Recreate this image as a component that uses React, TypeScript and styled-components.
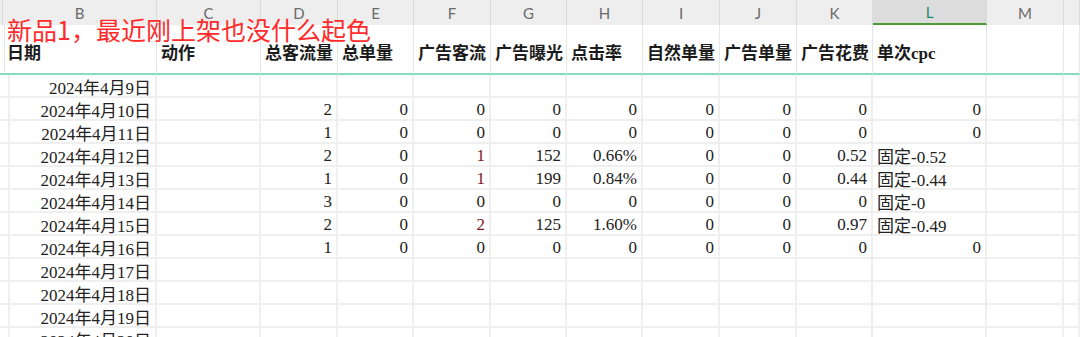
import React from "react";
import styled, { createGlobalStyle, css } from "styled-components";

const Global = createGlobalStyle`
  html, body { margin: 0; padding: 0; background: #ffffff; }
  body { width: 1080px; height: 337px; overflow: hidden; }
`;

const COLS = "3px 154px 104px 77px 76px 77px 76px 76px 77px 77px 76px 114px 77px 16px";

const Sheet = styled.div`
  position: relative;
  width: 1080px;
  height: 337px;
  overflow: hidden;
  background: #fff;
`;

const Row = styled.div<{ $h: number }>`
  display: grid;
  grid-template-columns: ${COLS};
  height: ${(p) => p.$h}px;
`;

const ColHead = styled.div<{ $active?: boolean }>`
  display: flex;
  align-items: center;
  justify-content: center;
  background: ${(p) => (p.$active ? "#dcdcdc" : "#eeeeee")};
  border-right: 1px solid #dadada;
  box-sizing: border-box;
  font-family: "Lato", "Open Sans", sans-serif;
  font-size: 15px;
  color: ${(p) => (p.$active ? "#1c8b72" : "#6a6a6a")};
  ${(p) =>
    p.$active &&
    css`
      border-bottom: 2px solid #4b9c34;
    `}
`;

const HeadCell = styled.div`
  display: flex;
  align-items: center;
  padding: 5px 0 0 4px;
  box-sizing: border-box;
  border-right: 1px solid #e6e6e6;
  border-bottom: 2px solid #86dcbd;
  font-family: "Liberation Serif", "Noto Sans CJK SC", serif;
  font-weight: 700;
  font-size: 17px;
  color: #1b1b1b;
  white-space: nowrap;
  overflow: hidden;
`;

const Cell = styled.div<{ $align?: "left" | "right"; $red?: boolean }>`
  display: flex;
  align-items: center;
  justify-content: ${(p) => (p.$align === "left" ? "flex-start" : "flex-end")};
  padding: 2px 4px 0 4px;
  box-sizing: border-box;
  border-right: 2px solid #efefef;
  border-bottom: 2px solid #efefef;
  font-family: "Liberation Serif", "Noto Sans CJK SC", serif;
  font-size: 17px;
  color: ${(p) => (p.$red ? "#7c1c1c" : "#222222")};
  white-space: nowrap;
  overflow: hidden;
`;

const Note = styled.div`
  position: absolute;
  left: 7px;
  top: 11px;
  font-family: "Noto Sans CJK SC", "Noto Sans", sans-serif;
  font-size: 25px;
  line-height: 36px;
  color: #ff2b2b;
  white-space: nowrap;
  pointer-events: none;
`;

const letters = ["", "B", "C", "D", "E", "F", "G", "H", "I", "J", "K", "L", "M", ""];
const heads = ["", "日期", "动作", "总客流量", "总单量", "广告客流", "广告曝光", "点击率", "自然单量", "广告单量", "广告花费", "单次cpc", "", ""];

type R = { date: string; v?: string[]; redF?: boolean; lText?: boolean };

const data: R[] = [
  { date: "2024年4月9日" },
  { date: "2024年4月10日", v: ["2", "0", "0", "0", "0", "0", "0", "0", "0"] },
  { date: "2024年4月11日", v: ["1", "0", "0", "0", "0", "0", "0", "0", "0"] },
  { date: "2024年4月12日", v: ["2", "0", "1", "152", "0.66%", "0", "0", "0.52", "固定-0.52"], redF: true, lText: true },
  { date: "2024年4月13日", v: ["1", "0", "1", "199", "0.84%", "0", "0", "0.44", "固定-0.44"], redF: true, lText: true },
  { date: "2024年4月14日", v: ["3", "0", "0", "0", "0", "0", "0", "0", "固定-0"], lText: true },
  { date: "2024年4月15日", v: ["2", "0", "2", "125", "1.60%", "0", "0", "0.97", "固定-0.49"], redF: true, lText: true },
  { date: "2024年4月16日", v: ["1", "0", "0", "0", "0", "0", "0", "0", "0"] },
  { date: "2024年4月17日" },
  { date: "2024年4月18日" },
  { date: "2024年4月19日" },
  { date: "2024年4月20日" },
];

export default function App() {
  return (
    <>
      <Global />
      <Sheet>
        <Row $h={25}>
          {letters.map((l, i) => (
            <ColHead key={i} $active={l === "L"}>
              {l}
            </ColHead>
          ))}
        </Row>
        <Row $h={50}>
          {heads.map((h, i) => (
            <HeadCell key={i}>{h}</HeadCell>
          ))}
        </Row>
        {data.map((r, ri) => (
          <Row $h={23} key={ri}>
            <Cell />
            <Cell>{r.date}</Cell>
            <Cell />
            {Array.from({ length: 9 }).map((_, ci) => {
              const val = r.v ? r.v[ci] : "";
              const isL = ci === 8;
              return (
                <Cell
                  key={ci}
                  $red={ci === 2 && r.redF && val !== "0"}
                  $align={isL && r.lText ? "left" : "right"}
                >
                  {val}
                </Cell>
              );
            })}
            <Cell />
            <Cell />
          </Row>
        ))}
        <Note>新品1，最近刚上架也没什么起色</Note>
      </Sheet>
    </>
  );
}
